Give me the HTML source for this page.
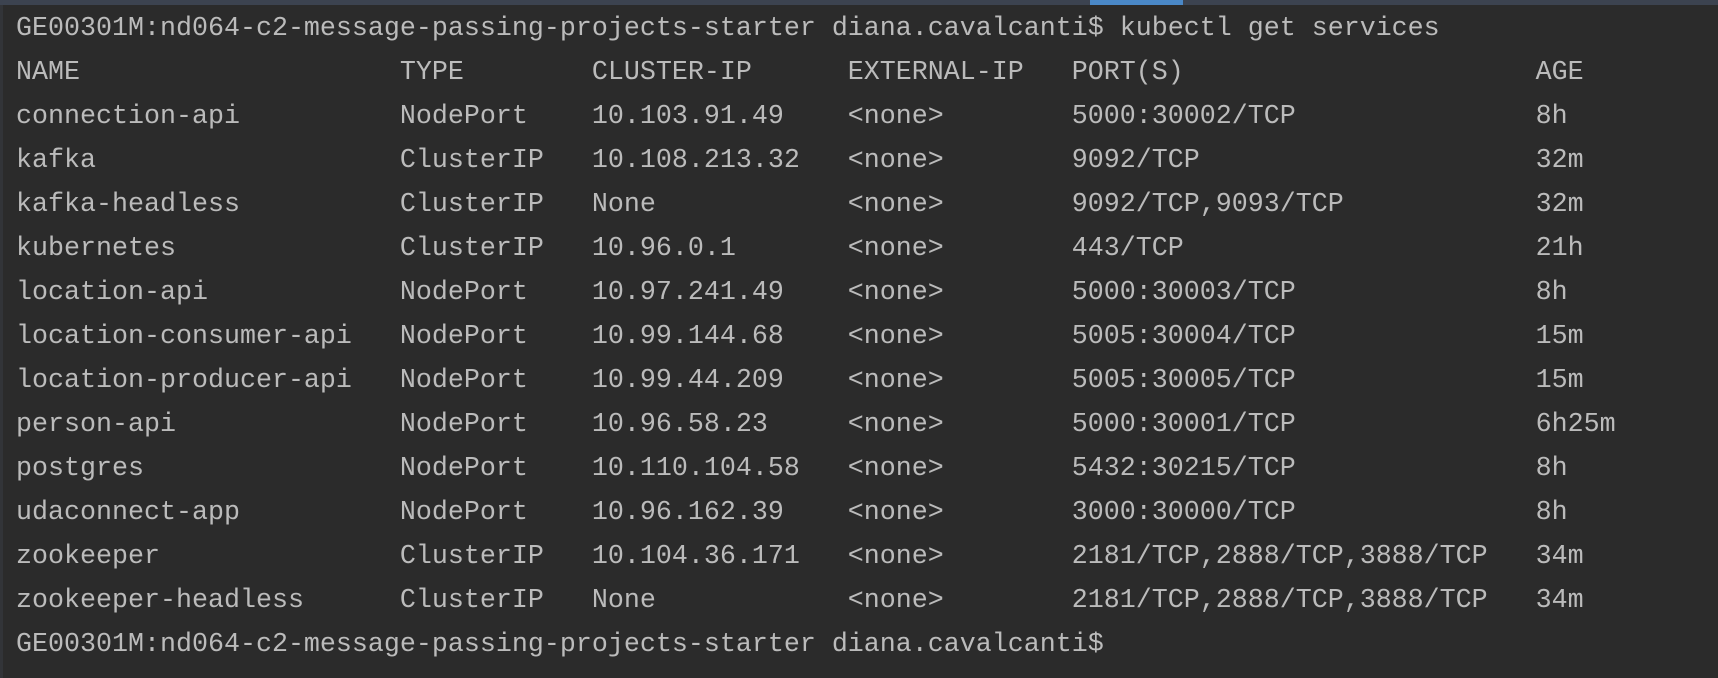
<!DOCTYPE html>
<html><head><meta charset="utf-8"><style>
html,body{margin:0;padding:0;background:#2b2b2b;width:1718px;height:678px;overflow:hidden}
.top{position:absolute;left:0;top:0;width:1718px;height:5px;background:#3c4350}
.blue{position:absolute;left:1090px;top:0;width:93px;height:5px;background:#4a88c7}
.left{position:absolute;left:0;top:5px;width:3px;height:673px;background:#323438}
pre{position:absolute;left:16px;top:6.5px;margin:0;font-family:"Liberation Mono",monospace;font-size:26.66px;line-height:44px;color:#bbbbbb;white-space:pre}
</style></head><body>
<div class="top"></div><div class="blue"></div><div class="left"></div>
<pre>GE00301M:nd064-c2-message-passing-projects-starter diana.cavalcanti$ kubectl get services
NAME                    TYPE        CLUSTER-IP      EXTERNAL-IP   PORT(S)                      AGE
connection-api          NodePort    10.103.91.49    &lt;none&gt;        5000:30002/TCP               8h
kafka                   ClusterIP   10.108.213.32   &lt;none&gt;        9092/TCP                     32m
kafka-headless          ClusterIP   None            &lt;none&gt;        9092/TCP,9093/TCP            32m
kubernetes              ClusterIP   10.96.0.1       &lt;none&gt;        443/TCP                      21h
location-api            NodePort    10.97.241.49    &lt;none&gt;        5000:30003/TCP               8h
location-consumer-api   NodePort    10.99.144.68    &lt;none&gt;        5005:30004/TCP               15m
location-producer-api   NodePort    10.99.44.209    &lt;none&gt;        5005:30005/TCP               15m
person-api              NodePort    10.96.58.23     &lt;none&gt;        5000:30001/TCP               6h25m
postgres                NodePort    10.110.104.58   &lt;none&gt;        5432:30215/TCP               8h
udaconnect-app          NodePort    10.96.162.39    &lt;none&gt;        3000:30000/TCP               8h
zookeeper               ClusterIP   10.104.36.171   &lt;none&gt;        2181/TCP,2888/TCP,3888/TCP   34m
zookeeper-headless      ClusterIP   None            &lt;none&gt;        2181/TCP,2888/TCP,3888/TCP   34m
GE00301M:nd064-c2-message-passing-projects-starter diana.cavalcanti$</pre>
</body></html>
